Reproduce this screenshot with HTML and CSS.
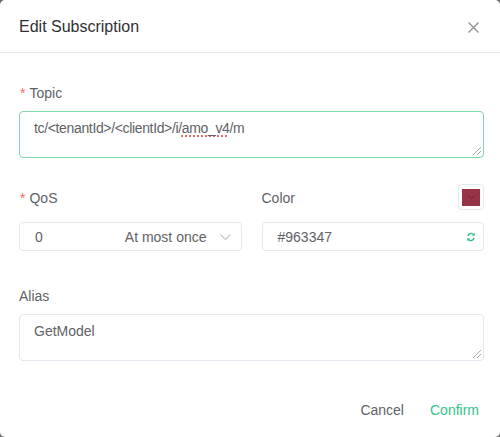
FILE: index.html
```html
<!DOCTYPE html>
<html lang="en">
<head>
  <meta charset="UTF-8">
  <title>Edit Subscription</title>
  <link rel="stylesheet" href="styles.css">
</head>
<body>
  <div class="dialog">
    <header class="dialog-header">
      <span class="dialog-title">Edit Subscription</span>
      <button class="close-btn" aria-label="Close">
        <svg width="11" height="11" viewBox="0 0 11 11"><path d="M0.5 0.5L10.5 10.5M10.5 0.5L0.5 10.5" stroke="#909399" stroke-width="1.4" fill="none"/></svg>
      </button>
    </header>

    <div class="dialog-body">
      <div class="form-item">
        <div class="form-label required">Topic</div>
        <div class="textarea is-focus">
          <span class="topic-text">tc/&lt;tenantId&gt;/&lt;clientId&gt;/i/<span class="typo">amo_v4</span>/m</span>
          <span class="resize"></span>
        </div>
      </div>

      <div class="form-row">
        <div class="form-item">
          <div class="form-label required">QoS</div>
          <div class="input select">
            <span class="select-value">0</span>
            <span class="select-desc">At most once</span>
            <svg class="arrow" width="11" height="6" viewBox="0 0 11 6"><path d="M0.5 0.5L5.5 5.5L10.5 0.5" stroke="#c0c4cc" stroke-width="1.1" fill="none"/></svg>
          </div>
        </div>
        <div class="form-item">
          <div class="form-label color-label">
            <span>Color</span>
            <span class="swatch">
              <span class="swatch-inner">
                <svg width="7" height="4" viewBox="0 0 7 4"><path d="M0.5 0.5L3.5 3.5L6.5 0.5" stroke="#6e2433" stroke-width="1" fill="none"/></svg>
              </span>
            </span>
          </div>
          <div class="input input-color">
            <span>#963347</span>
            <svg class="refresh" width="10" height="10" viewBox="0 0 24 24"><path d="M4.5 10a8 8 0 0 1 14.2-3.5M19.5 14a8 8 0 0 1-14.2 3.5" stroke="#34c388" stroke-width="3.4" fill="none"/><path d="M21 2v7h-7zM3 22v-7h7z" fill="#34c388"/></svg>
          </div>
        </div>
      </div>

      <div class="form-item">
        <div class="form-label">Alias</div>
        <div class="textarea">
          GetModel
          <span class="resize"></span>
        </div>
      </div>
    </div>

    <footer class="dialog-footer">
      <button class="btn">Cancel</button>
      <button class="btn btn-primary">Confirm</button>
    </footer>
  </div>
</body>
</html>
```

FILE: styles.css
```css
body {
  margin: 0;
  background: #6b6b6b;
  font-family: "Liberation Sans", Arial, sans-serif;
  color: #606266;
}

.dialog {
  width: 500px;
  height: 437px;
  background: #ffffff;
  border-radius: 5px;
  overflow: hidden;
}

.dialog-header {
  height: 53px;
  border-bottom: 1px solid #e6e8ee;
  box-sizing: border-box;
  padding: 0 19px;
  display: flex;
  align-items: center;
  justify-content: space-between;
}

.dialog-title {
  font-size: 16px;
  color: #303133;
  margin-top: 1px;
}

.close-btn {
  border: none;
  background: none;
  padding: 0;
  margin: 2px 2px 0 0;
  display: flex;
}

.dialog-body {
  padding: 30px 16px 0 19px;
}

.form-item {
  margin-bottom: 30px;
}

.form-item:last-child {
  margin-bottom: 0;
}

.form-row {
  display: flex;
  gap: 20px;
}

.form-row .form-item {
  flex: 1;
  margin-bottom: 35px;
}

.form-label {
  font-size: 14px;
  line-height: 20px;
  height: 20px;
  margin-bottom: 8px;
}

.form-row .form-label {
  margin-bottom: 14px;
}

.form-label.required::before {
  content: "*";
  color: #f56c6c;
  margin: 0 4px 0 1px;
}

.color-label {
  display: flex;
  justify-content: space-between;
  align-items: center;
}

.swatch {
  width: 26px;
  height: 26px;
  margin-top: -2px;
  box-sizing: border-box;
  border: 1px solid #e6e8ee;
  border-radius: 4px;
  display: flex;
  align-items: center;
  justify-content: center;
}

.swatch-inner {
  width: 18px;
  height: 17px;
  background: #963347;
  display: flex;
  align-items: center;
  justify-content: center;
}

.textarea {
  position: relative;
  height: 47px;
  box-sizing: border-box;
  border: 1px solid #e4e7ed;
  border-radius: 4px;
  padding: 6px 14px;
  font-size: 14px;
  line-height: 20px;
}

.textarea.is-focus {
  border-color: #7fd8ab;
}

.topic-text {
  letter-spacing: -0.35px;
}

.typo {
  text-decoration: underline dotted #f56c6c;
  text-decoration-thickness: 2px;
  text-underline-offset: 2px;
}

.resize {
  position: absolute;
  right: 2px;
  bottom: 2px;
  width: 8px;
  height: 8px;
  background: linear-gradient(135deg, transparent 45%, #a8a8a8 45%, #a8a8a8 52%, transparent 52%, transparent 70%, #a8a8a8 70%, #a8a8a8 77%, transparent 77%);
}

.input {
  height: 29px;
  box-sizing: border-box;
  border: 1px solid #e4e7ed;
  border-radius: 4px;
  padding: 0 10px 0 15px;
  font-size: 14px;
  display: flex;
  align-items: center;
}

.input-color {
  padding-right: 7px;
}

.input span:first-child {
  flex: 1;
}

.select-desc {
  color: #606266;
  margin-right: 13px;
}

.dialog-footer {
  display: flex;
  justify-content: flex-end;
  gap: 26px;
  padding: 41px 21px 0 0;
}

.btn {
  border: none;
  background: none;
  padding: 0;
  font-family: inherit;
  font-size: 14px;
  color: #606266;
}

.btn-primary {
  color: #34c388;
}
```
